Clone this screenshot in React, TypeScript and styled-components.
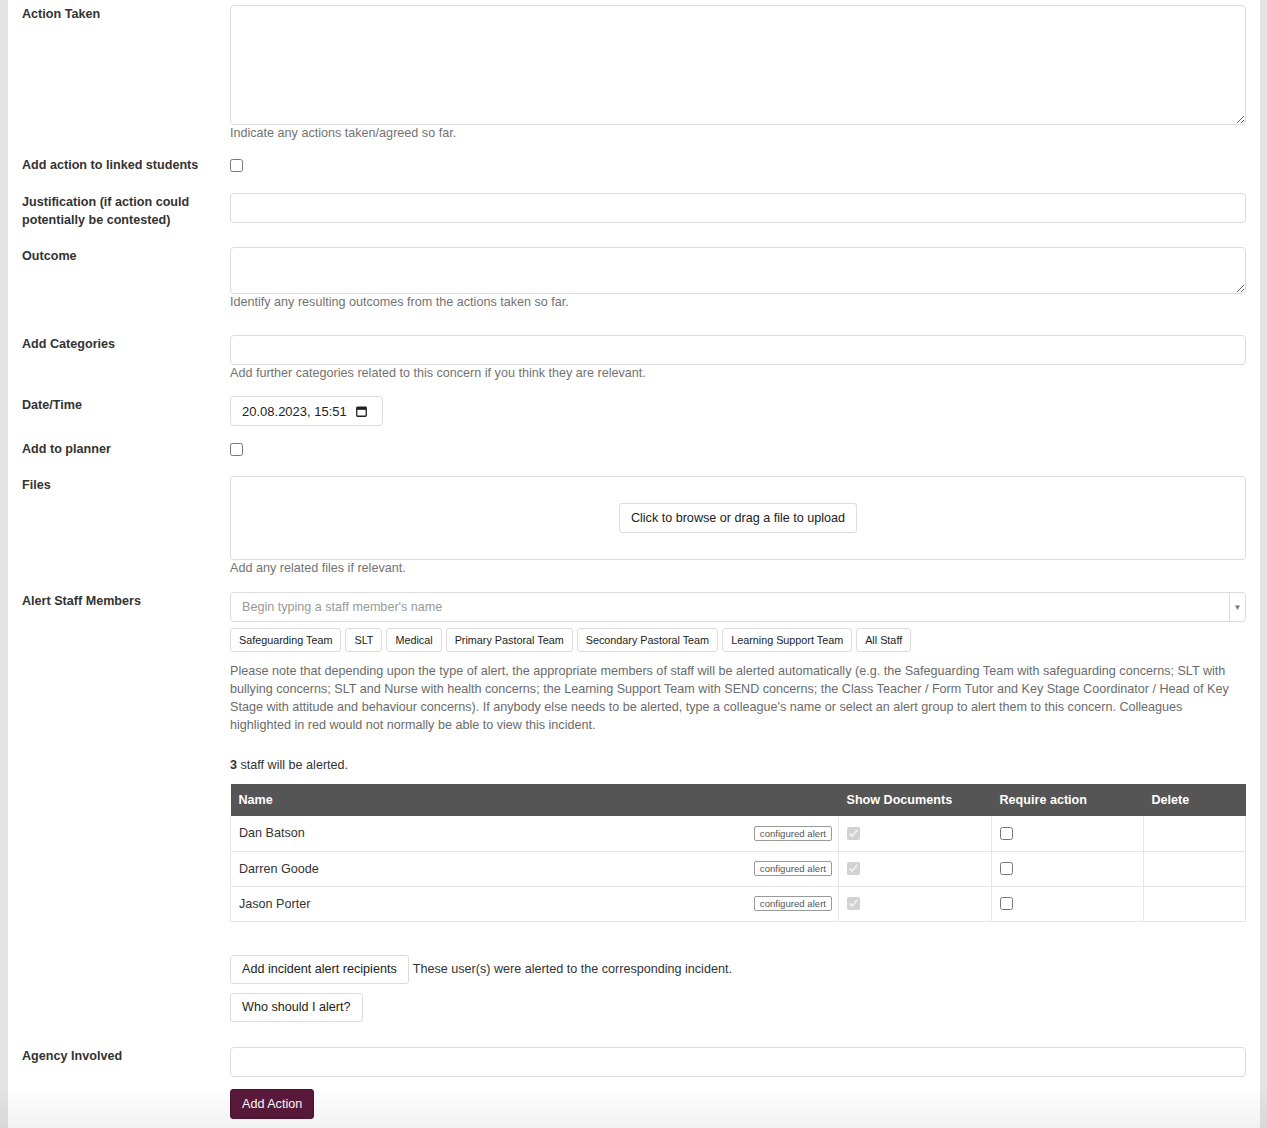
import React from "react";
import styled, { createGlobalStyle } from "styled-components";

const GlobalStyle = createGlobalStyle`
  html, body { margin: 0; padding: 0; }
  body {
    background: #e4e4e4;
    font-family: "Liberation Sans", Arial, Helvetica, sans-serif;
    font-size: 12.6px;
    color: #333;
  }
  * { box-sizing: border-box; }
`;

const Panel = styled.div`
  margin: 0 7px 0 8px;
  background: #fff;
  min-height: 100vh;
  padding: 5px 14px 40px 14px;
`;

const Row = styled.div<{ $mb: number }>`
  display: grid;
  grid-template-columns: 194px 1fr;
  column-gap: 14px;
  margin-bottom: ${(p) => p.$mb}px;
  align-items: start;
`;

const Label = styled.div`
  font-weight: bold;
  font-size: 12.6px;
  line-height: 18px;
  color: #333;
  padding-right: 8px;
`;

const Field = styled.div`
  min-width: 0;
`;

const TextArea = styled.textarea<{ $h: number }>`
  display: block;
  width: 100%;
  height: ${(p) => p.$h}px;
  border: 1px solid #dcdcdc;
  border-radius: 4px;
  font-family: inherit;
  font-size: 12.6px;
  padding: 6px 10px;
  resize: vertical;
  outline: none;
`;

const TextInput = styled.input`
  display: block;
  width: 100%;
  height: 30px;
  border: 1px solid #dcdcdc;
  border-radius: 4px;
  font-family: inherit;
  font-size: 12.6px;
  padding: 0 10px;
  outline: none;
`;

const Help = styled.div`
  font-size: 12.6px;
  line-height: 16px;
  color: #737373;
`;

const Check = styled.input.attrs({ type: "checkbox" })<{ $mt?: number }>`
  display: block;
  width: 13px;
  height: 13px;
  margin: ${(p) => p.$mt ?? 0}px 0 0 0;
`;

const DateBox = styled.div`
  display: inline-flex;
  align-items: center;
  gap: 9px;
  height: 30px;
  width: 153px;
  border: 1px solid #dcdcdc;
  border-radius: 4px;
  padding: 0 11px;
  font-size: 13px;
  color: #222;
`;

const DropZone = styled.div`
  height: 84px;
  border: 1px solid #dcdcdc;
  border-radius: 4px;
  display: flex;
  align-items: center;
  justify-content: center;
`;

const Button = styled.button<{ $h?: number }>`
  height: ${(p) => p.$h ?? 30}px;
  padding: 0 11px;
  background: #fff;
  border: 1px solid #dcdcdc;
  border-radius: 3px;
  font-family: inherit;
  font-size: 12.6px;
  color: #222;
  cursor: pointer;
`;

const PrimaryButton = styled.button`
  height: 30px;
  padding: 0 11px;
  background: #5b1a3b;
  border: 1px solid #4d1431;
  border-radius: 3px;
  font-family: inherit;
  font-size: 12.6px;
  color: #fff;
  cursor: pointer;
`;

const SelectBox = styled.div`
  display: flex;
  height: 30px;
  border: 1px solid #dcdcdc;
  border-radius: 4px;
`;

const SelectInput = styled.input`
  flex: 1;
  border: none;
  outline: none;
  background: transparent;
  font-family: inherit;
  font-size: 12.6px;
  padding: 0 11px;
  color: #333;
  &::placeholder { color: #999; }
`;

const SelectArrow = styled.div`
  width: 16px;
  border-left: 1px solid #dcdcdc;
  display: flex;
  align-items: center;
  justify-content: center;
  color: #777;
  font-size: 8px;
`;

const GroupRow = styled.div`
  display: flex;
  gap: 4px;
  margin-top: 6px;
`;

const GroupButton = styled.button`
  height: 24px;
  padding: 0 8px;
  background: #fff;
  border: 1px solid #dcdcdc;
  border-radius: 3px;
  font-family: inherit;
  font-size: 10.8px;
  color: #222;
`;

const Note = styled.p`
  margin: 10px 0 0;
  line-height: 18px;
  color: #6b6b6b;
  font-size: 12.6px;
`;

const Count = styled.div`
  margin-top: 22px;
  line-height: 18px;
  color: #333;
`;

const Table = styled.table`
  width: 100%;
  margin-top: 10px;
  border-collapse: collapse;
  table-layout: fixed;
`;

const Th = styled.th<{ $w?: number }>`
  ${(p) => (p.$w ? `width: ${p.$w}px;` : "")}
  background: #555;
  color: #fff;
  text-align: left;
  font-weight: bold;
  font-size: 12.6px;
  height: 32px;
  padding: 0 8px;
`;

const Td = styled.td`
  height: 35px;
  padding: 0 6px 0 8px;
  border: 1px solid #e6e6e6;
  border-top: none;
  vertical-align: middle;
  font-size: 12.6px;
  color: #333;
`;

const NameCell = styled.div`
  display: flex;
  align-items: center;
  justify-content: space-between;
`;

const Badge = styled.span`
  font-size: 9.6px;
  line-height: 13px;
  padding: 0 5px;
  border: 1px solid #9a9a9a;
  border-radius: 2px;
  color: #555;
`;

const ActionLine = styled.div<{ $mt: number }>`
  display: flex;
  align-items: center;
  gap: 4px;
  margin-top: ${(p) => p.$mt}px;
`;

const InlineText = styled.span`
  color: #333;
  font-size: 12.6px;
`;

const BottomFade = styled.div`
  position: fixed;
  left: 0;
  right: 0;
  bottom: 0;
  height: 42px;
  pointer-events: none;
  background: linear-gradient(to bottom, rgba(0, 0, 0, 0), rgba(0, 0, 0, 0.055));
`;

const CalendarIcon = () => (
  <svg width="11" height="11" viewBox="0 0 11 11" fill="none">
    <rect x="0.75" y="1.25" width="9.5" height="9" rx="0.8" stroke="#222" strokeWidth="1.3" />
    <rect x="0.75" y="1.25" width="9.5" height="2.6" fill="#222" />
  </svg>
);

const staff = ["Dan Batson", "Darren Goode", "Jason Porter"];
const groups = [
  "Safeguarding Team",
  "SLT",
  "Medical",
  "Primary Pastoral Team",
  "Secondary Pastoral Team",
  "Learning Support Team",
  "All Staff",
];

export default function App() {
  return (
    <>
      <GlobalStyle />
      <Panel>
        <Row $mb={15}>
          <Label>Action Taken</Label>
          <Field>
            <TextArea $h={120} />
            <Help>Indicate any actions taken/agreed so far.</Help>
          </Field>
        </Row>
        <Row $mb={19}>
          <Label>Add action to linked students</Label>
          <Field>
            <Check $mt={3} />
          </Field>
        </Row>
        <Row $mb={18}>
          <Label>Justification (if action could potentially be contested)</Label>
          <Field>
            <TextInput />
          </Field>
        </Row>
        <Row $mb={25}>
          <Label>Outcome</Label>
          <Field>
            <TextArea $h={47} />
            <Help>Identify any resulting outcomes from the actions taken so far.</Help>
          </Field>
        </Row>
        <Row $mb={15}>
          <Label>Add Categories</Label>
          <Field>
            <TextInput />
            <Help>Add further categories related to this concern if you think they are relevant.</Help>
          </Field>
        </Row>
        <Row $mb={14}>
          <Label>Date/Time</Label>
          <Field>
            <DateBox>
              <span>20.08.2023, 15:51</span>
              <CalendarIcon />
            </DateBox>
          </Field>
        </Row>
        <Row $mb={18}>
          <Label>Add to planner</Label>
          <Field>
            <Check $mt={3} />
          </Field>
        </Row>
        <Row $mb={16}>
          <Label>Files</Label>
          <Field>
            <DropZone>
              <Button>Click to browse or drag a file to upload</Button>
            </DropZone>
            <Help>Add any related files if relevant.</Help>
          </Field>
        </Row>
        <Row $mb={25}>
          <Label>Alert Staff Members</Label>
          <Field>
            <SelectBox>
              <SelectInput placeholder="Begin typing a staff member's name" />
              <SelectArrow>▼</SelectArrow>
            </SelectBox>
            <GroupRow>
              {groups.map((g) => (
                <GroupButton key={g}>{g}</GroupButton>
              ))}
            </GroupRow>
            <Note>
              Please note that depending upon the type of alert, the appropriate members of staff will be alerted
              automatically (e.g. the Safeguarding Team with safeguarding concerns; SLT with bullying concerns; SLT and
              Nurse with health concerns; the Learning Support Team with SEND concerns; the Class Teacher / Form Tutor
              and Key Stage Coordinator / Head of Key Stage with attitude and behaviour concerns). If anybody else needs
              to be alerted, type a colleague's name or select an alert group to alert them to this concern. Colleagues
              highlighted in red would not normally be able to view this incident.
            </Note>
            <Count>
              <b>3</b> staff will be alerted.
            </Count>
            <Table>
              <thead>
                <tr>
                  <Th>Name</Th>
                  <Th $w={153}>Show Documents</Th>
                  <Th $w={152}>Require action</Th>
                  <Th $w={102}>Delete</Th>
                </tr>
              </thead>
              <tbody>
                {staff.map((s) => (
                  <tr key={s}>
                    <Td>
                      <NameCell>
                        <span>{s}</span>
                        <Badge>configured alert</Badge>
                      </NameCell>
                    </Td>
                    <Td>
                      <Check checked disabled readOnly />
                    </Td>
                    <Td>
                      <Check />
                    </Td>
                    <Td />
                  </tr>
                ))}
              </tbody>
            </Table>
            <ActionLine $mt={33}>
              <Button $h={29}>Add incident alert recipients</Button>
              <InlineText>These user(s) were alerted to the corresponding incident.</InlineText>
            </ActionLine>
            <ActionLine $mt={9}>
              <Button $h={29}>Who should I alert?</Button>
            </ActionLine>
          </Field>
        </Row>
        <Row $mb={12}>
          <Label>Agency Involved</Label>
          <Field>
            <TextInput />
          </Field>
        </Row>
        <Row $mb={0}>
          <div />
          <Field>
            <PrimaryButton>Add Action</PrimaryButton>
          </Field>
        </Row>
      </Panel>
      <BottomFade />
    </>
  );
}
